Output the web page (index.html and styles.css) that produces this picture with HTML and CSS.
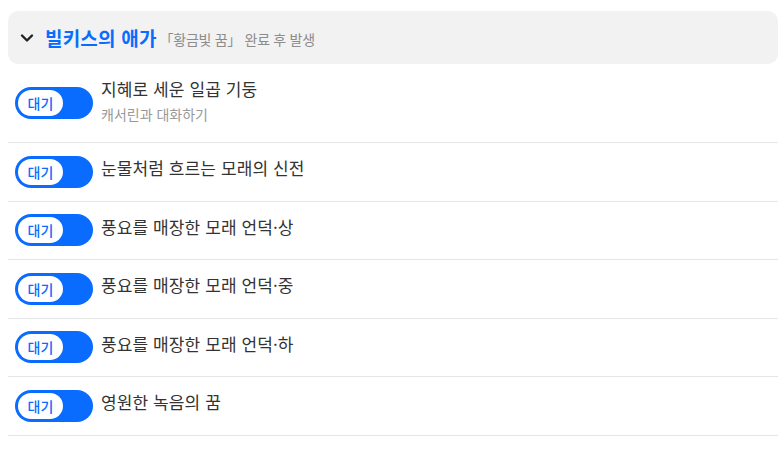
FILE: index.html
```html
<!DOCTYPE html>
<html lang="ko">
<head>
<meta charset="utf-8">
<link rel="stylesheet" href="styles.css">
</head>
<body>
<section class="quest">
  <div class="quest-head">
    <svg class="chev" width="14" height="10" viewBox="0 0 14 10"><path d="M2 2.5 L7 7.5 L12 2.5" fill="none" stroke="#222" stroke-width="2.4" stroke-linecap="round" stroke-linejoin="round"/></svg>
    <span class="quest-title">빌키스의 애가</span>
    <span class="quest-cond">「황금빛 꿈」 완료 후 발생</span>
  </div>
  <ul class="steps">
    <li class="step step-first">
      <span class="toggle"><span class="pill">대기</span></span>
      <div class="step-text">
        <div class="step-name">지혜로 세운 일곱 기둥</div>
        <div class="step-sub">캐서린과 대화하기</div>
      </div>
    </li>
    <li class="step">
      <span class="toggle"><span class="pill">대기</span></span>
      <div class="step-text"><div class="step-name">눈물처럼 흐르는 모래의 신전</div></div>
    </li>
    <li class="step">
      <span class="toggle"><span class="pill">대기</span></span>
      <div class="step-text"><div class="step-name">풍요를 매장한 모래 언덕·상</div></div>
    </li>
    <li class="step">
      <span class="toggle"><span class="pill">대기</span></span>
      <div class="step-text"><div class="step-name">풍요를 매장한 모래 언덕·중</div></div>
    </li>
    <li class="step">
      <span class="toggle"><span class="pill">대기</span></span>
      <div class="step-text"><div class="step-name">풍요를 매장한 모래 언덕·하</div></div>
    </li>
    <li class="step">
      <span class="toggle"><span class="pill">대기</span></span>
      <div class="step-text"><div class="step-name">영원한 녹음의 꿈</div></div>
    </li>
  </ul>
</section>
</body>
</html>
```

FILE: styles.css
```css
* { box-sizing: border-box; }
body {
  margin: 0;
  padding: 11px 1px 0 8px;
  background: #fff;
  font-family: "Noto Sans CJK KR", "Noto Sans", sans-serif;
  color: #333;
}
.quest-head {
  display: flex;
  align-items: center;
  height: 53px;
  background: #f2f2f2;
  border-radius: 10px;
  padding: 0 0 0 12px;
}
.chev { margin-right: 11px; margin-top: 1px; }
.quest-title {
  font-size: 19px;
  font-weight: 700;
  color: #0a6cff;
  margin-right: 3px;
  letter-spacing: 0.2px;
}
.quest-cond {
  font-size: 14px;
  color: #8c8c8c;
  margin-top: 2px;
  letter-spacing: -0.3px;
}
.steps { list-style: none; margin: 0; padding: 0; }
.step {
  display: flex;
  align-items: center;
  padding: 0 0 0 7px;
  border-bottom: 1px solid #e6e6e6;
  height: 58.5px;
}
.step-first { height: 79px; }
.toggle {
  display: flex;
  align-items: center;
  width: 78px;
  height: 32px;
  padding: 3px;
  border-radius: 16px;
  background: #0a6cff;
  flex-shrink: 0;
  margin-right: 8px;
}
.pill {
  display: flex;
  align-items: center;
  justify-content: center;
  width: 45px;
  height: 26px;
  border-radius: 13px;
  background: #fff;
  color: #0a6cff;
  font-size: 14px;
  font-weight: 500;
}
.step-text { margin-bottom: 7px; }
.step-first .step-text { margin-bottom: 5px; }
.step-name { font-size: 17px; line-height: 26px; color: #333; letter-spacing: 0.1px; }
.step-sub { font-size: 14px; line-height: 24px; color: #999; }
```
